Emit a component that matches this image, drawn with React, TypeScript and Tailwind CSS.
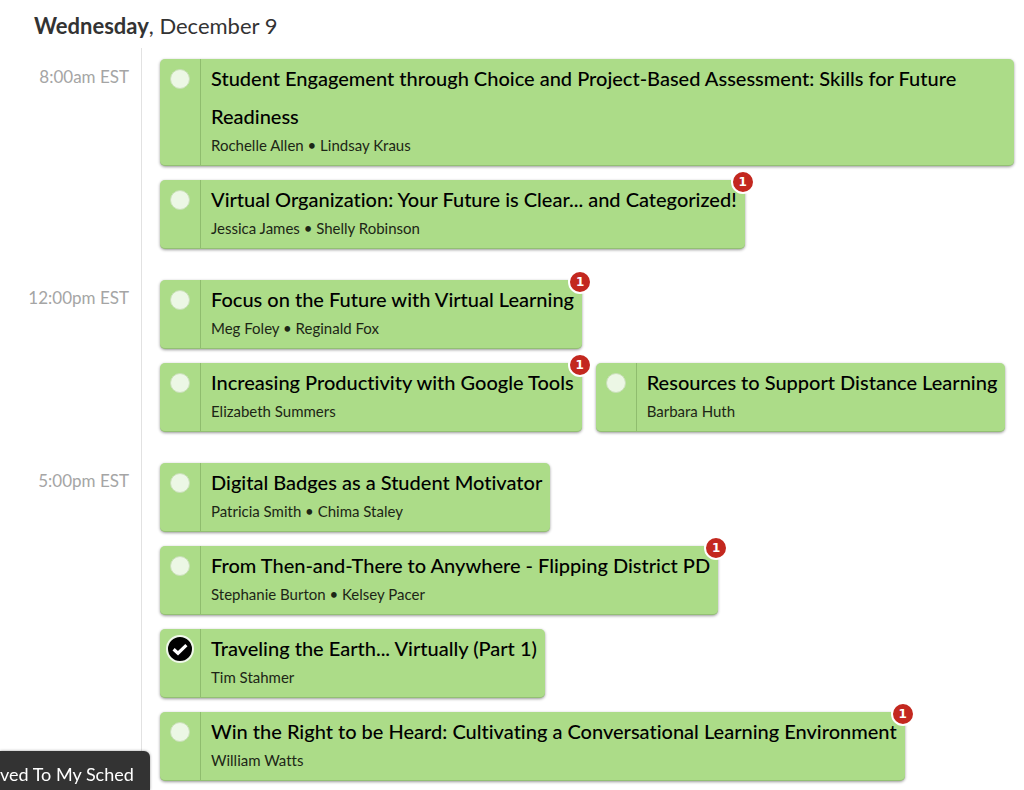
type Session = {
  title: string
  speakers: string
  count?: number
  saved?: boolean
}

type Slot = {
  time: string
  rows: Session[][]
}

const slots: Slot[] = [
  {
    time: '8:00am EST',
    rows: [
      [
        {
          title: 'Student Engagement through Choice and Project-Based Assessment: Skills for Future Readiness',
          speakers: 'Rochelle Allen • Lindsay Kraus',
        },
      ],
      [
        {
          title: 'Virtual Organization: Your Future is Clear... and Categorized!',
          speakers: 'Jessica James • Shelly Robinson',
          count: 1,
        },
      ],
    ],
  },
  {
    time: '12:00pm EST',
    rows: [
      [{ title: 'Focus on the Future with Virtual Learning', speakers: 'Meg Foley • Reginald Fox', count: 1 }],
      [
        { title: 'Increasing Productivity with Google Tools', speakers: 'Elizabeth Summers', count: 1 },
        { title: 'Resources to Support Distance Learning', speakers: 'Barbara Huth' },
      ],
    ],
  },
  {
    time: '5:00pm EST',
    rows: [
      [{ title: 'Digital Badges as a Student Motivator', speakers: 'Patricia Smith • Chima Staley' }],
      [
        {
          title: 'From Then-and-There to Anywhere - Flipping District PD',
          speakers: 'Stephanie Burton • Kelsey Pacer',
          count: 1,
        },
      ],
      [{ title: 'Traveling the Earth... Virtually (Part 1)', speakers: 'Tim Stahmer', saved: true }],
      [
        {
          title: 'Win the Right to be Heard: Cultivating a Conversational Learning Environment',
          speakers: 'William Watts',
          count: 1,
        },
      ],
    ],
  },
]

function SaveToggle({ title, saved }: { title: string; saved?: boolean }) {
  return (
    <label className="grid h-10 w-10 shrink-0 cursor-pointer place-items-center">
      <input
        type="checkbox"
        defaultChecked={saved}
        aria-label={`Save ${title}`}
        className="peer col-start-1 row-start-1 h-5 w-5 appearance-none rounded-full border border-[#c9dfb8] bg-[#ecf7e5] checked:h-7 checked:w-7 checked:border-2 checked:border-[#f0f8ea] checked:bg-black"
      />
      <svg
        viewBox="0 0 16 16"
        className="pointer-events-none invisible col-start-1 row-start-1 h-4 w-4 peer-checked:visible"
        fill="none"
        stroke="white"
        strokeWidth="3.2"
      >
        <path d="M1.6 8.2 6 12.2 14.4 4.2" />
      </svg>
    </label>
  )
}

function SessionCard({ title, speakers, count, saved }: Session) {
  return (
    <div className="relative flex rounded-[5px] border-b border-[#93bf74] bg-[#acdc88] shadow-[0_1px_3px_rgba(0,0,0,0.4)]">
      <SaveToggle title={title} saved={saved} />
      <a href="#" className="block border-l border-[#8fbd6e] pr-2 pb-[9px] pl-[10px] text-black">
        <span className="block text-xl leading-[38px] font-medium">{title}</span>
        <span className="block text-[15px] leading-[21px] text-[#1c2616]">{speakers}</span>
      </a>
      {count && (
        <span className="absolute -top-[10px] -right-[10px] flex h-6 w-6 items-center justify-center rounded-full border-2 border-white bg-[#c3281f] font-['DejaVu_Sans',sans-serif] text-xs font-bold text-white">
          {count}
        </span>
      )}
    </div>
  )
}

export default function App() {
  return (
    <div className="min-h-screen bg-white font-[Lato,sans-serif] [font-variant-ligatures:none]">
      <h1 className="px-[34px] pt-2 text-[22px] leading-9 text-[#333]">
        <strong className="font-bold">Wednesday</strong>, December 9
      </h1>

      <main className="pt-1">
        {slots.map((slot) => (
          <section key={slot.time} className="group flex">
            <h2 className="w-[141px] shrink-0 pt-4 pr-3 text-right text-[17px] leading-[26px] text-[#a5a5a5]">
              {slot.time}
            </h2>
            <div className="flex min-w-0 flex-1 flex-col gap-[14px] border-l border-[#e2e2e2] pt-[11px] pr-[10px] pb-5 pl-[18px] group-last:pb-2">
              {slot.rows.map((row) => (
                <div key={row[0].title} className="flex gap-[14px]">
                  {row.map((session) => (
                    <SessionCard key={session.title} {...session} />
                  ))}
                </div>
              ))}
            </div>
          </section>
        ))}
      </main>

      <div
        role="status"
        className="fixed bottom-0 left-0 rounded-tr-md bg-[#333] pt-2 pr-4 text-lg leading-[31px] text-white shadow-[0_0_3px_rgba(0,0,0,0.4)]"
      >
        ved To My Sched
      </div>
    </div>
  )
}
